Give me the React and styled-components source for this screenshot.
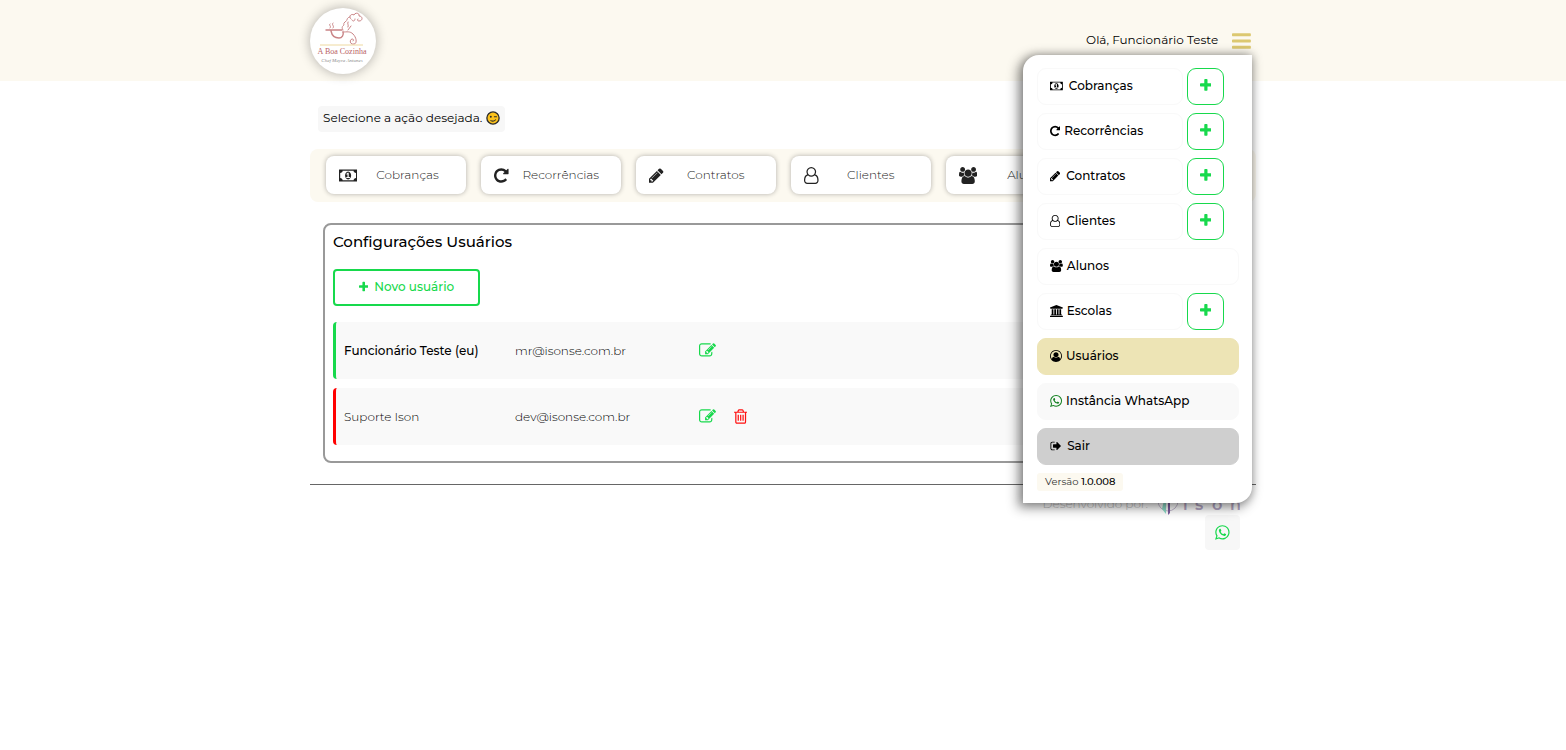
import React from 'react'
import styled, { createGlobalStyle } from 'styled-components'

const glyphs = {
  money: {
    w: 1920,
    d: 'M768 1152h384v-96h-128v-448h-114l-148 137 77 80q42-37 55-57h2v288h-128v96zm512-256q0 70-21 142t-59.5 134-101.5 101-138 39-138-39-101.5-101-59.5-134-21-142 21-142 59.5-134 101.5-101 138-39 138 39 101.5 101 59.5 134 21 142zm512 256v-512q-106 0-181-75t-75-181h-1152q0 106-75 181t-181 75v512q106 0 181 75t75 181h1152q0-106 75-181t181-75zm128-832v1152q0 26-19 45t-45 19h-1792q-26 0-45-19t-19-45v-1152q0-26 19-45t45-19h1792q26 0 45 19t19 45z',
  },
  repeat: {
    x: 128,
    w: 1536,
    d: 'M1664 256v448q0 26-19 45t-45 19h-448q-42 0-59-40-17-39 14-69l138-138q-148-137-349-137-104 0-198.5 40.5t-163.5 109.5-109.5 163.5-40.5 198.5 40.5 198.5 109.5 163.5 163.5 109.5 198.5 40.5q119 0 225-52t179-147q7-10 23-12 15 0 25 9l137 138q9 8 9.5 20.5t-7.5 22.5q-109 132-264 204.5t-327 72.5q-156 0-298-61t-245-164-164-245-61-298 61-298 164-245 245-164 298-61q147 0 284.5 55.5t244.5 156.5l130-129q29-31 70-14 39 17 39 59z',
  },
  pencil: {
    x: 128,
    w: 1536,
    d: 'M491 1536l91-91-235-235-91 91v107h128v128h107zm523-928q0-22-22-22-10 0-17 7l-542 542q-7 7-7 17 0 22 22 22 10 0 17-7l542-542q7-7 7-17zm-54-192l416 416-832 832h-416v-416zm683 96q0 53-37 90l-166 166-416-416 166-165q36-38 90-38 53 0 91 38l235 234q37 39 37 91z',
  },
  user: {
    w: 1536,
    d: 'M1201 784q47 14 89.5 38t89 73 79.5 115.5 55 172 22 236.5q0 154-100 263.5t-241 109.5h-854q-141 0-241-109.5t-100-263.5q0-131 22-236.5t55-172 79.5-115.5 89-73 89.5-38q-79-125-79-272 0-104 40.5-198.5t109.5-163.5 163.5-109.5 198.5-40.5 198.5 40.5 163.5 109.5 109.5 163.5 40.5 198.5q0 147-79 272zm-433-656q-159 0-271.5 112.5t-112.5 271.5 112.5 271.5 271.5 112.5 271.5-112.5 112.5-271.5-112.5-271.5-271.5-112.5zm427 1536q88 0 150.5-71.5t62.5-173.5q0-239-78.5-377t-225.5-145q-145 127-336 127t-336-127q-147 7-225.5 145t-78.5 377q0 102 62.5 173.5t150.5 71.5h854z',
  },
  group: {
    x: 64,
    w: 1920,
    d: 'M657 896q-162 5-265 128h-134q-82 0-138-40.5t-56-118.5q0-353 124-353 6 0 43.5 21t97.5 42.5 119 21.5q67 0 133-23-5 37-5 66 0 139 81 256zm1071 637q0 120-73 189.5t-194 69.5h-874q-121 0-194-69.5t-73-189.5q0-53 3.5-103.5t14-109 26.5-108.5 43-97.5 62-81 85.5-53.5 111.5-20q10 0 43 21.5t73 48 107 48 135 21.5 135-21.5 107-48 73-48 43-21.5q61 0 111.5 20t85.5 53.5 62 81 43 97.5 26.5 108.5 14 109 3.5 103.5zm-1024-1277q0 106-75 181t-181 75-181-75-75-181 75-181 181-75 181 75 75 181zm704 384q0 159-112.5 271.5t-271.5 112.5-271.5-112.5-112.5-271.5 112.5-271.5 271.5-112.5 271.5 112.5 112.5 271.5zm576 225q0 78-56 118.5t-138 40.5h-134q-103-123-265-128 81-117 81-256 0-29-5-66 66 23 133 23 59 0 119-21.5t97.5-42.5 43.5-21q124 0 124 353zm-128-609q0 106-75 181t-181 75-181-75-75-181 75-181 181-75 181 75 75 181z',
  },
  university: {
    w: 1920,
    d: 'M960 0l960 384v128h-128q0 26-20.5 45t-48.5 19h-1526q-28 0-48.5-19t-20.5-45h-128v-128zm-704 640h256v768h128v-768h256v768h128v-768h256v768h128v-768h256v768h59q28 0 48.5 19t20.5 45v64h-1664v-64q0-26 20.5-45t48.5-19h59v-768zm1595 960q28 0 48.5 19t20.5 45v128h-1920v-128q0-26 20.5-45t48.5-19h1782z',
  },
  userCircle: {
    w: 1792,
    d: 'M896 0q182 0 348 71t286 191 191 286 71 348q0 181-70.5 347t-190.5 286-286 191.5-349 71.5-349-71-285.5-191.5-190.5-286-71-347.5 71-348 191-286 286-191 348-71zm619 1351q149-205 149-455 0-156-61-298t-164-245-245-164-298-61-298 61-245 164-164 245-61 298q0 250 149 455 66-327 306-327 131 128 313 128t313-128q240 0 306 327zm-235-647q0-159-112.5-271.5t-271.5-112.5-271.5 112.5-112.5 271.5 112.5 271.5 271.5 112.5 271.5-112.5 112.5-271.5z',
  },
  whatsapp: {
    x: 128,
    w: 1536,
    d: 'M1113 974q13 0 97.5 44t89.5 53q2 5 2 15 0 33-17 76-16 39-71 65.5t-102 26.5q-57 0-190-62-98-45-170-118t-148-185q-72-107-71-194v-8q3-91 74-158 24-22 52-22 6 0 18 1.5t19 1.5q19 0 26.5 6.5t15.5 27.5q8 20 33 88t25 75q0 21-34.5 57.5t-34.5 46.5q0 7 5 15 34 73 102 137 56 53 151 101 12 7 22 7 15 0 54-48.5t52-48.5zm-203 530q127 0 243.5-50t200.5-134 134-200.5 50-243.5-50-243.5-134-200.5-200.5-134-243.5-50-243.5 50-200.5 134-134 200.5-50 243.5q0 203 120 368l-79 233 242-77q158 104 345 104zm0-1382q153 0 292.5 60t240.5 161 161 240.5 60 292.5-60 292.5-161 240.5-240.5 161-292.5 60q-195 0-365-94l-417 134 136-405q-108-178-108-389 0-153 60-292.5t161-240.5 240.5-161 292.5-60z',
  },
  signOut: {
    w: 1664,
    d: 'M704 1440q0 4 1 20t.5 26.5-3 23.5-10 19.5-20.5 6.5h-320q-119 0-203.5-84.5t-84.5-203.5v-704q0-119 84.5-203.5t203.5-84.5h320q13 0 22.5 9.5t9.5 22.5q0 4 1 20t.5 26.5-3 23.5-10 19.5-20.5 6.5h-320q-66 0-113 47t-47 113v704q0 66 47 113t113 47h312l11.5 1 11.5 3 8 5.5 7 9 2 13.5zm928-544q0 26-19 45l-544 544q-19 19-45 19t-45-19-19-45v-288h-448q-26 0-45-19t-19-45v-384q0-26 19-45t45-19h448v-288q0-26 19-45t45-19 45 19l544 544q19 19 19 45z',
  },
  plus: {
    x: 192,
    w: 1408,
    d: 'M1600 736v192q0 40-28 68t-68 28h-416v416q0 40-28 68t-68 28h-192q-40 0-68-28t-28-68v-416h-416q-40 0-68-28t-28-68v-192q0-40 28-68t68-28h416v-416q0-40 28-68t68-28h192q40 0 68 28t28 68v416h416q40 0 68 28t28 68z',
  },
  edit: {
    w: 1792,
    d: 'M888 1184l116-116-152-152-116 116v56h96v96h56zm440-720q-16-16-33 1l-350 350q-17 17-1 33t33-1l350-350q17-17 1-33zm80 594v190q0 119-84.5 203.5t-203.5 84.5h-832q-119 0-203.5-84.5t-84.5-203.5v-832q0-119 84.5-203.5t203.5-84.5h832q63 0 117 25 15 7 18 23 3 17-9 29l-49 49q-14 14-32 8-23-6-45-6h-832q-66 0-113 47t-47 113v832q0 66 47 113t113 47h832q66 0 113-47t47-113v-126q0-13 9-22l64-64q15-15 35-7t20 29zm-96-738l288 288-672 672h-288v-288zm444 132l-92 92-288-288 92-92q28-28 68-28t68 28l152 152q28 28 28 68t-28 68z',
  },
  trash: {
    x: 192,
    w: 1408,
    d: 'M704 736v576q0 14-9 23t-23 9h-64q-14 0-23-9t-9-23v-576q0-14 9-23t23-9h64q14 0 23 9t9 23zm256 0v576q0 14-9 23t-23 9h-64q-14 0-23-9t-9-23v-576q0-14 9-23t23-9h64q14 0 23 9t9 23zm256 0v576q0 14-9 23t-23 9h-64q-14 0-23-9t-9-23v-576q0-14 9-23t23-9h64q14 0 23 9t9 23zm128 724v-948h-896v948q0 22 7 40.5t14.5 27 10.5 8.5h832q3 0 10.5-8.5t14.5-27 7-40.5zm-672-1076h448l-48-117q-7-9-17-11h-317q-10 2-17 11zm928 32v64q0 14-9 23t-23 9h-96v948q0 83-47 143.5t-113 60.5h-832q-66 0-113-58.5t-47-141.5v-952h-96q-14 0-23-9t-9-23v-64q0-14 9-23t23-9h309l70-167q15-37 54-63t79-26h320q40 0 79 26t54 63l70 167h309q14 0 23 9t9 23z',
  },
  bars: {
    x: 128,
    w: 1536,
    d: 'M1664 1344v128q0 26-19 45t-45 19h-1408q-26 0-45-19t-19-45v-128q0-26 19-45t45-19h1408q26 0 45 19t19 45zm0-512v128q0 26-19 45t-45 19h-1408q-26 0-45-19t-19-45v-128q0-26 19-45t45-19h1408q26 0 45 19t19 45zm0-512v128q0 26-19 45t-45 19h-1408q-26 0-45-19t-19-45v-128q0-26 19-45t45-19h1408q26 0 45 19t19 45z',
  },
}

const Icon = ({ name, size }) => {
  const { x = 0, w, d } = glyphs[name]
  return (
    <Glyph viewBox={`${x} 0 ${w} 1792`} $size={size} aria-hidden="true">
      <path d={d} />
    </Glyph>
  )
}

const shortcuts = [
  { icon: 'money', label: 'Cobranças' },
  { icon: 'repeat', label: 'Recorrências' },
  { icon: 'pencil', label: 'Contratos' },
  { icon: 'user', label: 'Clientes' },
  { icon: 'group', label: 'Alunos' },
]

const menu = [
  { icon: 'money', label: 'Cobranças', add: true, spaced: true },
  { icon: 'repeat', label: 'Recorrências', add: true },
  { icon: 'pencil', label: 'Contratos', add: true, spaced: true },
  { icon: 'user', label: 'Clientes', add: true, spaced: true },
  { icon: 'group', label: 'Alunos' },
  { icon: 'university', label: 'Escolas', add: true },
  { icon: 'userCircle', label: 'Usuários', bg: '#ede4b5' },
  { icon: 'whatsapp', size: 14, label: 'Instância WhatsApp', bg: '#f9f9f9', tint: '#128020' },
  { icon: 'signOut', label: 'Sair', bg: '#cfcfcf', spaced: true },
]

const users = [
  { name: 'Funcionário Teste (eu)', email: 'mr@isonse.com.br', me: true },
  { name: 'Suporte Ison', email: 'dev@isonse.com.br' },
]

const BrandMark = () => (
  <svg viewBox="0 0 66 66" width="66" height="66" role="img" aria-label="A Boa Cozinha">
    <g fill="none" stroke="#c98385" strokeWidth="1" strokeLinecap="round">
      <path d="M16 22h16M21 23c1 5 4 7 8 7 3 0 5-3 4-6" strokeWidth="1.4" />
      <path d="M33 24c4 0 7-1 10 2 4 4 4 10 1 10-4 1-5-4-2-5 2 0 2 2 1 2" />
      <path d="M33 22c-2-3 0-4 1-5-1-3 2-3 3-5 0-2 2-3 3-3" strokeDasharray="3 1" />
      <path d="M41 11c-3-2 0-6 3-4 1-3 6-2 5 1 4 0 4 5 0 5-2 0-2-2-1-2M42 12c1 2 3 1 3-1" />
      <path d="M38 14c-1 2 1 3 0 5M41 18l-3 4M20 16c-2 1 2 2 0 4M23 15c-2 2 2 3 0 5" />
    </g>
    <path d="M10 37h43" stroke="#eed9a0" />
    <text x="32" y="46" textAnchor="middle" fontFamily="Liberation Serif, serif" fontSize="8" fill="#b96365">
      A Boa Cozinha
    </text>
    <text x="32" y="54" textAnchor="middle" fontFamily="Liberation Serif, serif" fontStyle="italic" fontSize="5" fill="#8d8d8d">
      Chef Mayra Antunes
    </text>
  </svg>
)

const IsonMark = () => (
  <svg viewBox="0 0 84 28" width="84" height="28" role="img" aria-label="ison">
    <circle cx="12" cy="14" r="10" fill="none" stroke="#c6bcd2" />
    <path d="M10 4v23l-4-5z" fill="#8fdcc8" />
    <path d="M12 4v24l2-2V4z" fill="#7d5fa0" />
    <text
      x="27 39 56 74"
      y="23"
      fontFamily="Montserrat, Inter, sans-serif"
      fontWeight="600"
      fontSize="16"
      fill="#b3a6c4"
    >
      ison
    </text>
  </svg>
)

const Wink = () => (
  <svg viewBox="0 0 16 16" width="14" height="14" role="img" aria-label="piscadela">
    <circle cx="8" cy="8" r="7" fill="#fcc21b" stroke="#2b2b2b" strokeWidth="1.5" />
    <circle cx="5.5" cy="6.5" r="1.1" fill="#2b2b2b" />
    <path d="M9.5 6.5h2.5M5.5 11q3 1.500 5.500-1" fill="none" stroke="#2b2b2b" strokeWidth="1.2" strokeLinecap="round" />
  </svg>
)

const App = () => {
  return (
    <>
      <GlobalStyle />
      <Header>
        <HeaderInner>
          <Logo href="#inicio">
            <BrandMark />
          </Logo>
          <Greeting>
            <span>Olá, Funcionário Teste</span>
            <MenuToggle type="button" aria-label="Menu" aria-expanded="true">
              <Icon name="bars" size={22} />
            </MenuToggle>
          </Greeting>
          <Menu>
            {menu.map((item) => (
              <MenuRow key={item.label}>
                <MenuLink href="#" $bg={item.bg} $short={item.add} $spaced={item.spaced}>
                  <MenuIcon $tint={item.tint}>
                    <Icon name={item.icon} size={item.size || 12} />
                  </MenuIcon>
                  {item.label}
                </MenuLink>
                {item.add && (
                  <AddButton type="button" aria-label={`Adicionar em ${item.label}`}>
                    <Icon name="plus" size={15} />
                  </AddButton>
                )}
              </MenuRow>
            ))}
            <Version>
              Versão <b>1.0.008</b>
            </Version>
          </Menu>
        </HeaderInner>
      </Header>

      <Page>
        <Prompt>
          Selecione a ação desejada. <Wink />
        </Prompt>
        <Shortcuts>
          {shortcuts.map((item) => (
            <Shortcut key={item.label} type="button">
              <Icon name={item.icon} size={17} />
              <span>{item.label}</span>
            </Shortcut>
          ))}
        </Shortcuts>

        <Panel>
          <Title>Configurações Usuários</Title>
          <NewUser type="button">
            <Icon name="plus" size={12} />
            Novo usuário
          </NewUser>
          <Users>
            <tbody>
              {users.map((user) => (
                <User key={user.email} $me={user.me}>
                  <NameCell>{user.name}</NameCell>
                  <EmailCell>{user.email}</EmailCell>
                  <td>
                    <Actions>
                      <Action type="button" aria-label="Editar" $color="#17d94c">
                        <Icon name="edit" size={17} />
                      </Action>
                      {!user.me && (
                        <Action type="button" aria-label="Excluir" $color="#ff1010">
                          <Icon name="trash" size={17} />
                        </Action>
                      )}
                    </Actions>
                  </td>
                </User>
              ))}
            </tbody>
          </Users>
        </Panel>

        <Footer>
          <Credits>
            <span>Desenvolvido por:</span>
            <IsonMark />
          </Credits>
          <Chat href="#whatsapp" aria-label="WhatsApp">
            <Icon name="whatsapp" size={17} />
          </Chat>
        </Footer>
      </Page>
    </>
  )
}

export default App


const GlobalStyle = createGlobalStyle`
    * {
        box-sizing: border-box;
    }

    body {
        margin: 0;
        background: #fff;
        color: #000;
        font-family: Montserrat, Inter, sans-serif;
        font-size: 12px;
        line-height: 16px;
    }

    button {
        font: inherit;
        cursor: pointer;
    }

    a {
        color: inherit;
        text-decoration: none;
    }
`

const Glyph = styled.svg`
    height: ${(pr) => pr.$size}px;
    fill: currentColor;
    flex: none;
`

const Header = styled.header`
    background: #fcf9f0;
`

const HeaderInner = styled.div`
    position: relative;
    display: flex;
    justify-content: space-between;
    max-width: 946px;
    height: 81px;
    margin: 0 auto;
    padding: 8px 4px 0 0;
`

const Logo = styled.a`
    width: 66px;
    height: 66px;
    border-radius: 50%;
    background: #fff;
    box-shadow: 0 0 12px rgba(0, 0, 0, 0.3);
`

const Greeting = styled.div`
    display: flex;
    align-items: center;
    gap: 14px;
    height: 66px;
    padding-right: 1px;

    span {
        padding-bottom: 2px;
    }
`

const MenuToggle = styled.button`
    display: flex;
    padding: 0;
    border: 0;
    background: none;
    color: #dcc870;
`

const Menu = styled.nav`
    position: absolute;
    top: 55px;
    right: 4px;
    z-index: 2;
    display: flex;
    flex-direction: column;
    gap: 8px;
    width: 229px;
    padding: 13px 13px 12px 14px;
    border-radius: 16px 0 16px 0;
    background: #fff;
    box-shadow: -3px 3px 12px 2px rgba(0, 0, 0, 0.42), 0 0 8px rgba(0, 0, 0, 0.2);
`

const MenuRow = styled.div`
    display: flex;
    gap: 4px;
`

const MenuLink = styled.a`
    display: flex;
    align-items: center;
    gap: ${(pr) => (pr.$spaced ? 6 : 4)}px;
    width: ${(pr) => (pr.$short ? '146px' : '100%')};
    height: 37px;
    padding: 0 12px 2px;
    border: 1px solid ${(pr) => pr.$bg || '#f9f9f9'};
    border-radius: 9px;
    background: ${(pr) => pr.$bg || '#fff'};
    font-weight: 500;
`

const MenuIcon = styled.span`
    display: flex;
    color: ${(pr) => pr.$tint || '#000'};
`

const AddButton = styled.button`
    display: flex;
    align-items: center;
    justify-content: center;
    width: 37px;
    height: 37px;
    padding: 0 0 2px;
    border: 1px solid #17d94c;
    border-radius: 9px;
    background: #fff;
    color: #17d94c;
`

const Version = styled.div`
    align-self: flex-start;
    padding: 1px 8px;
    border-radius: 3px;
    background: #fcf9f0;
    color: #333;
    font-size: 10px;

    b {
        color: #000;
        font-weight: 500;
    }
`

const Page = styled.main`
    max-width: 946px;
    margin: 0 auto;
    padding-top: 25px;
`

const Prompt = styled.div`
    display: flex;
    align-items: center;
    gap: 4px;
    width: fit-content;
    height: 26px;
    margin-left: 8px;
    padding: 0 5px 2px;
    border-radius: 4px;
    background: #f7f7f7;
`

const Shortcuts = styled.div`
    display: flex;
    gap: 15px;
    margin-top: 17px;
    padding: 7px 16px 8px;
    border-radius: 8px;
    background: #fcf9f0;
`

const Shortcut = styled.button`
    display: flex;
    align-items: center;
    width: 140px;
    height: 38px;
    padding: 0 8px 0 13px;
    border: 0;
    border-radius: 8px;
    background: #fff;
    box-shadow: 0 0 5px rgba(0, 0, 0, 0.3);
    color: #222;
    font-weight: 300;

    span {
        flex: 1;
        text-align: center;
    }
`

const Panel = styled.section`
    margin: 21px 13px 0;
    padding: 7px 8px;
    border: 2px solid #999;
    border-radius: 8px;
`

const Title = styled.h1`
    margin: 0;
    font-size: 15px;
    font-weight: 500;
    line-height: 20px;
`

const NewUser = styled.button`
    display: flex;
    align-items: center;
    justify-content: center;
    gap: 6px;
    width: 147px;
    height: 37px;
    margin: 17px 0 7px;
    padding: 0 0 2px;
    border: 2px solid #17d94c;
    border-radius: 4px;
    background: #fff;
    color: #17d94c;
    font-weight: 500;
`

const Users = styled.table`
    width: 100%;
    border-spacing: 0 9px;

    td {
        height: 57px;
        padding: 0;
        background: #f9f9f9;
    }
`

const User = styled.tr`
    font-weight: ${(pr) => (pr.$me ? 500 : 300)};

    td:first-child {
        border-left: 3px solid ${(pr) => (pr.$me ? '#17d94c' : '#ff0000')};
        border-radius: 4px 0 0 4px;
    }
`

const NameCell = styled.td`
    width: 182px;

    && {
        padding-left: 8px;
    }
`

const EmailCell = styled.td`
    width: 184px;
    font-weight: 300;
`

const Actions = styled.div`
    display: flex;
    gap: 18px;
`

const Action = styled.button`
    display: flex;
    padding: 0;
    border: 0;
    background: none;
    color: ${(pr) => pr.$color};
`

const Footer = styled.footer`
    display: flex;
    flex-direction: column;
    align-items: flex-end;
    margin-top: 21px;
    padding: 2px 16px 0 0;
    border-top: 1px solid #666;
`

const Credits = styled.div`
    display: flex;
    align-items: flex-end;
    gap: 8px;
    color: #bbb;
    font-weight: 300;

    span {
        padding-bottom: 3px;
    }
`

const Chat = styled.a`
    display: flex;
    align-items: center;
    justify-content: center;
    width: 35px;
    height: 35px;
    border-radius: 4px;
    background: #f7f7f7;
    color: #17d94c;
`
